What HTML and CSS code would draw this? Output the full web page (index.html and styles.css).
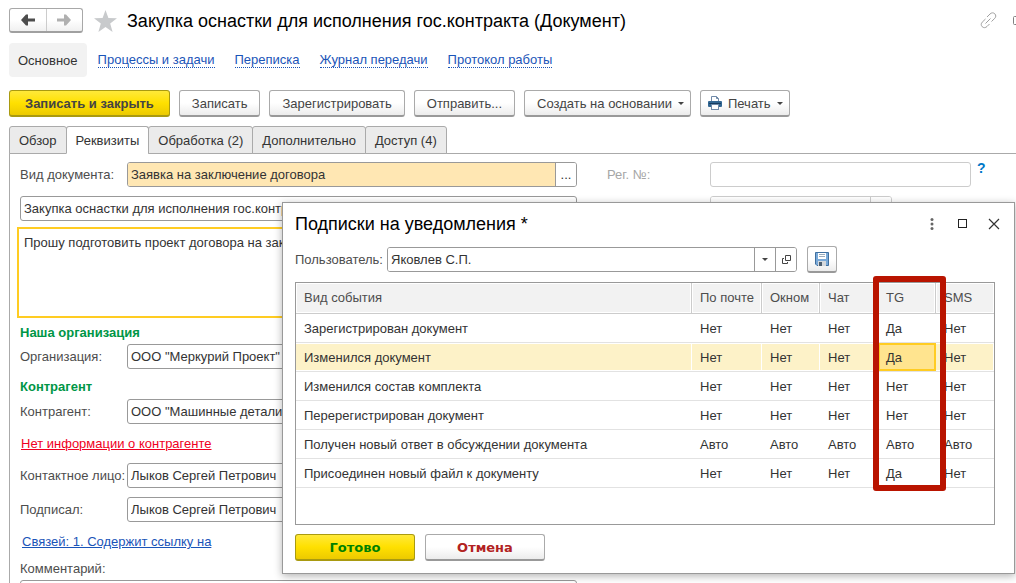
FILE: index.html
```html
<!DOCTYPE html>
<html lang="ru">
<head>
  <meta charset="UTF-8">
  <title>Закупка оснастки для исполнения гос.контракта (Документ)</title>
  <link rel="stylesheet" href="styles.css">
</head>
<body>
  <header class="header">
    <div class="history">
      <button type="button" aria-label="Назад">
        <svg width="14" height="12" viewBox="0 0 14 12"><path d="M0 6 L5 0.5 H7 V4.500 H14 V7.500 H7 V11.500 H5 Z" fill="#4d4d4d"/></svg>
      </button>
      <button type="button" aria-label="Вперед">
        <svg width="14" height="12" viewBox="0 0 14 12"><path d="M14 6 L9 0.5 H7 V4.500 H0 V7.500 H7 V11.500 H9 Z" fill="#b0b0b0"/></svg>
      </button>
    </div>
    <svg class="star" width="23" height="22" viewBox="0 0 23 22"><path d="M11.5 0 L14.4 8 L23 8.3 L16.2 13.5 L18.6 22 L11.5 17 L4.4 22 L6.8 13.5 L0 8.3 L8.6 8 Z" fill="#c8cacc"/></svg>
    <h1>Закупка оснастки для исполнения гос.контракта (Документ)</h1>
    <svg class="link-icon" width="36" height="17" viewBox="0 0 36 17" fill="none" stroke="#a0a0a0">
      <path d="M5.500 11.500 L10.500 6.500 M7 5 L10 2 C11.500 0.500 13.500 0.500 14.800 1.800 C16.200 3.200 16 5 14.800 6.300 L11.500 9.500 M9.500 12 L7 14.500 C5.500 16 3.500 16 2.200 14.700 C0.800 13.300 1 11.500 2.200 10.200 L5.500 7"/>
      <rect x="33.500" y="4.500" width="8" height="8" rx="1" stroke="#808080"/>
    </svg>
  </header>

  <nav class="nav">
    <span class="current">Основное</span>
    <a href="#">Процессы и задачи</a>
    <a href="#">Переписка</a>
    <a href="#">Журнал передачи</a>
    <a href="#">Протокол работы</a>
  </nav>

  <div class="toolbar">
    <button type="button" class="btn primary">Записать и закрыть</button>
    <button type="button" class="btn">Записать</button>
    <button type="button" class="btn">Зарегистрировать</button>
    <button type="button" class="btn">Отправить...</button>
    <button type="button" class="btn menu">Создать на основании <i class="caret"></i></button>
    <button type="button" class="btn menu print">
      <svg width="14" height="14" viewBox="0 0 14 14">
        <path d="M3.500 5 V0.500 H8.500 L10.500 2.500 V5" fill="#fff" stroke="#6f89a8"/>
        <path d="M8.500 0.500 V2.500 H10.500" fill="none" stroke="#6f89a8"/>
        <rect x="0" y="5" width="14" height="6" rx="1" fill="#336793"/>
        <rect x="1" y="7" width="12" height="1" fill="#173d60"/>
        <rect x="3.500" y="8.500" width="7" height="5" fill="#fff" stroke="#6f89a8"/>
      </svg>
      Печать <i class="caret"></i>
    </button>
  </div>

  <div class="tabs" role="tablist">
    <button type="button" role="tab">Обзор</button>
    <button type="button" role="tab" class="active" aria-selected="true">Реквизиты</button>
    <button type="button" role="tab">Обработка (2)</button>
    <button type="button" role="tab">Дополнительно</button>
    <button type="button" role="tab">Доступ (4)</button>
  </div>

  <main class="panel">
    <form class="column">
      <div class="row">
        <label for="kind">Вид документа:</label>
        <div class="combo">
          <input type="text" id="kind" class="filled" value="Заявка на заключение договора">
          <button type="button" aria-label="Выбрать">...</button>
        </div>
      </div>
      <input type="text" class="field subject" aria-label="Заголовок" value="Закупка оснастки для исполнения гос.контракта">
      <textarea class="summary" aria-label="Содержание">Прошу подготовить проект договора на закупку оснастки</textarea>
      <h2>Наша организация</h2>
      <div class="row">
        <label for="org">Организация:</label>
        <input type="text" id="org" class="field" value="ООО &quot;Меркурий Проект&quot;">
      </div>
      <h2 class="partner">Контрагент</h2>
      <div class="row">
        <label for="partner">Контрагент:</label>
        <input type="text" id="partner" class="field" value="ООО &quot;Машинные детали&quot;">
      </div>
      <a href="#" class="warning">Нет информации о контрагенте</a>
      <div class="row">
        <label for="contact">Контактное лицо:</label>
        <input type="text" id="contact" class="field" value="Лыков Сергей Петрович">
      </div>
      <div class="row signer">
        <label for="signer">Подписал:</label>
        <input type="text" id="signer" class="field" value="Лыков Сергей Петрович">
      </div>
      <a href="#" class="relations">Связей: 1. Содержит ссылку на</a>
      <label for="comment" class="comment-label">Комментарий:</label>
      <input type="text" id="comment" class="field">
    </form>

    <div class="side">
      <div class="row">
        <label for="regnum">Рег. №:</label>
        <input type="text" id="regnum" class="field">
        <a href="#" class="help">?</a>
      </div>
      <div class="combo date">
        <input type="text" aria-label="Дата регистрации">
        <button type="button" aria-label="Календарь"></button>
      </div>
    </div>
  </main>

  <section class="dialog" role="dialog" aria-labelledby="dialogTitle">
    <div class="dialog-header">
      <h1 id="dialogTitle">Подписки на уведомления *</h1>
      <button type="button" aria-label="Ещё">
        <svg width="4" height="12" viewBox="0 0 4 12" fill="#666"><circle cx="2" cy="1.500" r="1.500"/><circle cx="2" cy="6" r="1.500"/><circle cx="2" cy="10.500" r="1.500"/></svg>
      </button>
      <button type="button" aria-label="Развернуть">
        <svg width="10" height="10" viewBox="0 0 10 10"><rect x="0.500" y="0.500" width="8" height="8" fill="none" stroke="#222"/></svg>
      </button>
      <button type="button" aria-label="Закрыть">
        <svg width="12" height="12" viewBox="0 0 12 12"><path d="M1 1 L11 11 M11 1 L1 11" stroke="#333" stroke-width="1.200"/></svg>
      </button>
    </div>

    <div class="user-row">
      <label for="user">Пользователь:</label>
      <div class="combo">
        <input type="text" id="user" value="Яковлев С.П.">
        <button type="button" aria-label="Список"><i class="caret"></i></button>
        <button type="button" aria-label="Открыть">
          <svg width="9" height="9" viewBox="0 0 9 9" fill="none" stroke="#444"><path d="M3.500 0.500 H8.500 V5.500 H3.500 Z M2 3.500 H0.500 V8.500 H5.500 V7"/></svg>
        </button>
      </div>
      <button type="button" class="btn save" aria-label="Сохранить">
        <svg width="14" height="14" viewBox="0 0 14 14">
          <path d="M0.500 0.500 H13.500 V13.500 H2 L0.500 12 Z" fill="#79a9d8" stroke="#3f6f9f"/>
          <rect x="3" y="1" width="8" height="6" fill="#fff"/>
          <path d="M4 2.500 H10 M4 4.500 H10" stroke="#9aabbb"/>
          <rect x="3" y="9" width="8" height="5" fill="#d5d9dd"/>
          <rect x="4" y="10" width="3" height="4" fill="#4d5f70"/>
        </svg>
      </button>
    </div>

    <div class="events">
      <table>
        <thead>
          <tr><th>Вид события</th><th class="mail">По почте</th><th class="narrow">Окном</th><th class="narrow">Чат</th><th class="narrow">TG</th><th class="narrow">SMS</th></tr>
        </thead>
        <tbody>
          <tr><td>Зарегистрирован документ</td><td>Нет</td><td>Нет</td><td>Нет</td><td>Да</td><td>Нет</td></tr>
          <tr class="selected"><td>Изменился документ</td><td>Нет</td><td>Нет</td><td>Нет</td><td class="cursor">Да</td><td>Нет</td></tr>
          <tr><td>Изменился состав комплекта</td><td>Нет</td><td>Нет</td><td>Нет</td><td>Нет</td><td>Нет</td></tr>
          <tr><td>Перерегистрирован документ</td><td>Нет</td><td>Нет</td><td>Нет</td><td>Нет</td><td>Нет</td></tr>
          <tr><td>Получен новый ответ в обсуждении документа</td><td>Авто</td><td>Авто</td><td>Авто</td><td>Авто</td><td>Авто</td></tr>
          <tr><td>Присоединен новый файл к документу</td><td>Нет</td><td>Нет</td><td>Нет</td><td>Да</td><td>Нет</td></tr>
        </tbody>
      </table>
      <div class="highlight"></div>
    </div>

    <div class="actions">
      <button type="button" class="btn primary done">Готово</button>
      <button type="button" class="btn cancel">Отмена</button>
    </div>
  </section>
</body>
</html>
```

FILE: styles.css
```css
* {
  box-sizing: border-box;
}
body {
  display: flex;
  flex-direction: column;
  height: 100vh;
  margin: 0;
  padding: 8px 0 0 9px;
  overflow: hidden;
  position: relative;
  background: #fff;
  color: #333;
  font-family: "Liberation Sans", Arial, sans-serif;
  font-size: 13px;
  line-height: 15px;
}
button, input, textarea {
  font: inherit;
  color: inherit;
  margin: 0;
}
button {
  display: flex;
  align-items: center;
  justify-content: center;
  padding: 0;
}
svg {
  flex: none;
}
h1 {
  margin: 0;
  color: #000;
  font-size: 18px;
  line-height: 24px;
  font-weight: normal;
  white-space: nowrap;
}
a {
  color: #1a54b8;
}

/* header */
.header {
  display: flex;
  flex: none;
  align-items: center;
  height: 25px;
}
.history {
  display: flex;
  width: 74px;
  height: 25px;
  border: 1px solid #a8a8a8;
  border-bottom: 2px solid #a0a0a0;
  border-radius: 3px;
  background: linear-gradient(#fff 50%, #f0f0f0);
}
.history button {
  flex: 1;
  border: none;
  background: none;
}
.history button + button {
  border-left: 1px solid #ccc;
}
.star {
  margin: 0 10px 0 11px;
}
.link-icon {
  margin-left: auto;
}

.nav {
  display: flex;
  flex: none;
  align-items: center;
  gap: 20px;
  height: 34px;
  margin-top: 10px;
}
.nav a {
  border-bottom: 1px dotted #1a54b8;
  line-height: 14px;
  text-decoration: none;
}
.current {
  margin-right: -9px;
  padding: 10px 9px 9px;
  border-radius: 4px;
  background: #f2f2f2;
}

/* buttons */
.toolbar {
  display: flex;
  flex: none;
  gap: 9px;
  margin-top: 13px;
}
.btn {
  height: 27px;
  padding: 0 12px;
  border: 1px solid #aaa;
  border-bottom: 2px solid #999;
  border-radius: 3px;
  background: linear-gradient(#fff 50%, #ececec);
  color: #444;
  white-space: nowrap;
}
.btn.primary {
  padding: 0 15px;
  border-color: #a99a10;
  background: linear-gradient(#ffe93a, #ffe000 50%, #ecca00);
  font-weight: bold;
}
.btn.menu {
  gap: 6px;
  padding-right: 6px;
}
.btn.print {
  padding-left: 7px;
}
.caret {
  border: 3px solid transparent;
  border-top-color: #444;
  border-bottom: none;
}

/* tabs */
.tabs {
  display: flex;
  flex: none;
  height: 28px;
  margin-top: 9px;
  border-bottom: 1px solid #aaa;
}
.tabs button {
  height: 28px;
  margin-right: -1px;
  padding: 0 9px;
  border: 1px solid #aaa;
  border-radius: 3px 3px 0 0;
  background: #ebebeb;
}
.tabs .active {
  border-bottom-color: #fff;
  background: #fff;
}

/* document form */
.panel {
  display: flex;
  flex: 1;
  gap: 30px;
  min-height: 0;
  padding: 8px 45px 0 10px;
  border-left: 1px solid #aaa;
}
.column {
  flex: 0 0 557px;
}
.side {
  flex: 1;
}
.row {
  display: flex;
  align-items: center;
}
.row label {
  flex: 0 0 107px;
}
label {
  color: #4d4d4d;
  white-space: nowrap;
}
.field, .combo {
  width: 100%;
  min-width: 0;
  height: 25px;
  border: 1px solid #999;
  border-radius: 3px;
  background: #fff;
}
.field, .combo input {
  padding: 0 3px;
}
.combo {
  display: flex;
  overflow: hidden;
}
.combo input {
  flex: 1;
  min-width: 0;
  border: none;
}
.combo button {
  flex: 0 0 21px;
  border: none;
  border-left: 1px solid #999;
  background: #fff;
}
.combo .filled {
  background: #ffe7b3;
}
.subject {
  display: block;
  margin-top: 9px;
}
.summary {
  display: block;
  width: 563px;
  height: 91px;
  margin: 6px -3px 0;
  padding: 6px 5px;
  border: 2px solid #fc2;
  outline: none;
  resize: none;
}
h2 {
  margin: 7px 0 4px;
  color: #009646;
  font-size: 13px;
  line-height: 15px;
}
.partner {
  margin: 10px 0 5px;
}
.warning {
  display: block;
  margin: 12px 1px;
  color: #f00022;
}
.signer {
  margin-top: 9px;
}
.relations {
  display: block;
  margin: 12px 2px;
}
.comment-label {
  display: block;
  margin-bottom: 4px;
}
.side .row label {
  flex-basis: 103px;
  color: #a6a6a6;
}
.side .field, .date {
  border-color: #ccc;
}
.help {
  flex: none;
  align-self: flex-start;
  width: 11px;
  margin: -1px -17px 0 6px;
  color: #0078c8;
  font-size: 14px;
  font-weight: bold;
  text-decoration: none;
}
.date {
  width: 182px;
  margin: 9px 0 0 103px;
}
.date button {
  border-color: #ccc;
}

/* subscriptions window */
.dialog {
  position: absolute;
  top: 202px;
  left: 282px;
  right: 1px;
  padding: 8px 19px 12px 12px;
  border: 1px solid #999;
  background: #fff;
  box-shadow: 0 2px 8px rgba(0, 0, 0, 0.3);
}
.dialog-header {
  display: flex;
  align-items: center;
  height: 25px;
}
.dialog-header h1 {
  flex: 1;
}
.dialog-header button {
  width: 31px;
  height: 24px;
  border: none;
  background: none;
}
.dialog-header button:last-child {
  margin-right: -14px;
}
.user-row {
  display: flex;
  align-items: center;
  height: 27px;
  margin-top: 10px;
}
.user-row label {
  flex: 0 0 92px;
}
.user-row .combo {
  flex: 0 1 410px;
}
.save {
  width: 30px;
  margin-left: 10px;
  padding: 0;
}
.events {
  position: relative;
  margin-top: 9px;
  padding-bottom: 36px;
  border: 1px solid #999;
}
table {
  width: 100%;
  table-layout: fixed;
  border-collapse: separate;
  border-spacing: 0;
}
th, td {
  height: 29px;
  padding: 0 8px;
  border-bottom: 1px solid #e2e2e2;
  text-align: left;
  white-space: nowrap;
}
th {
  height: 31px;
  padding-bottom: 2px;
  border-right: 1px solid #ccc;
  border-bottom-color: #ccc;
  background: #f2f2f2;
  box-shadow: inset 0 0 0 1px #fff;
  color: #4d4d4d;
  font-weight: normal;
}
th:last-child {
  border-right: none;
}
.mail {
  width: 70px;
}
.narrow {
  width: 58px;
}
.selected td {
  background: #fdf2c8;
  box-shadow: inset -1px -1px #fff, inset 0 1px #fff;
}
.selected .cursor {
  background: #ffe48f;
  box-shadow: inset 0 0 0 2px #fc2;
}
.highlight {
  position: absolute;
  top: -7px;
  right: 48px;
  width: 73px;
  height: 215px;
  border: 6px solid #b91400;
  border-radius: 3px;
}
.actions {
  display: flex;
  gap: 10px;
  margin-top: 9px;
}
.actions .btn {
  width: 120px;
  font-family: "DejaVu Sans", Verdana, sans-serif;
  font-weight: bold;
}
.actions .done {
  color: #008000;
}
.actions .cancel {
  color: #b22222;
}
```
